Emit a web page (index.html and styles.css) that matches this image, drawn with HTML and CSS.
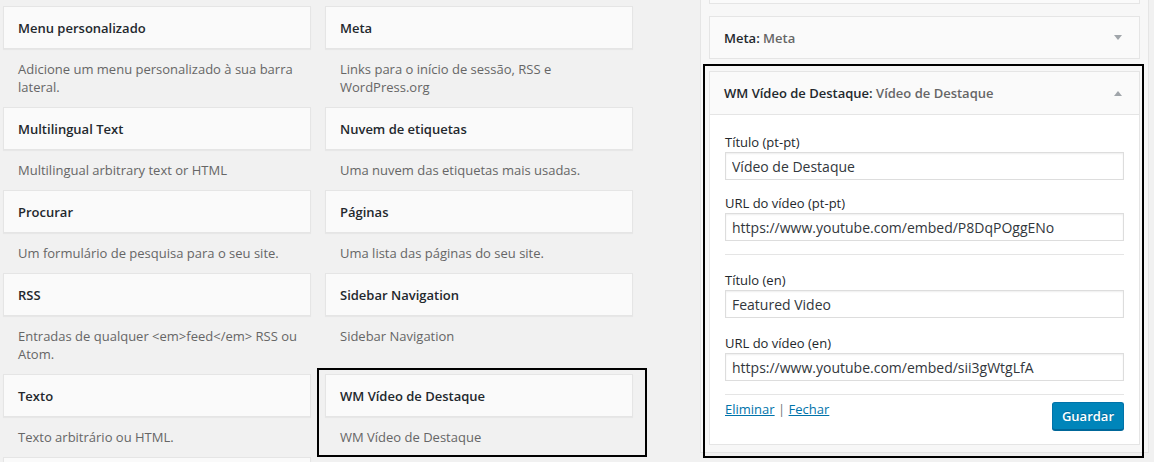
FILE: index.html
```html
<!DOCTYPE html>
<html lang="pt">
<head>
  <meta charset="UTF-8" />
  <meta name="viewport" content="width=device-width, initial-scale=1.0"/>
  <title>Widgets</title>
  <link rel="stylesheet" href="styles.css">
</head>
<body>

  <div class="page">

    <div class="available">
      <div class="widget">
        <div class="widget-top"><h3>Menu personalizado</h3></div>
        <div class="widget-description">Adicione um menu personalizado à sua barra lateral.</div>
      </div>
      <div class="widget">
        <div class="widget-top"><h3>Meta</h3></div>
        <div class="widget-description">Links para o início de sessão, RSS e WordPress.org</div>
      </div>

      <div class="widget">
        <div class="widget-top"><h3>Multilingual Text</h3></div>
        <div class="widget-description">Multilingual arbitrary text or HTML</div>
      </div>
      <div class="widget">
        <div class="widget-top"><h3>Nuvem de etiquetas</h3></div>
        <div class="widget-description">Uma nuvem das etiquetas mais usadas.</div>
      </div>

      <div class="widget">
        <div class="widget-top"><h3>Procurar</h3></div>
        <div class="widget-description">Um formulário de pesquisa para o seu site.</div>
      </div>
      <div class="widget">
        <div class="widget-top"><h3>Páginas</h3></div>
        <div class="widget-description">Uma lista das páginas do seu site.</div>
      </div>

      <div class="widget">
        <div class="widget-top"><h3>RSS</h3></div>
        <div class="widget-description">Entradas de qualquer &lt;em&gt;feed&lt;/em&gt; RSS ou Atom.</div>
      </div>
      <div class="widget">
        <div class="widget-top"><h3>Sidebar Navigation</h3></div>
        <div class="widget-description">Sidebar Navigation</div>
      </div>

      <div class="widget">
        <div class="widget-top"><h3>Texto</h3></div>
        <div class="widget-description">Texto arbitrário ou HTML.</div>
      </div>
      <div class="widget highlight-left">
        <div class="widget-top"><h3>WM Vídeo de Destaque</h3></div>
        <div class="widget-description">WM Vídeo de Destaque</div>
      </div>

      <!-- next widget, only its top edge is in view -->
      <div class="widget">
        <div class="widget-top"></div>
      </div>
    </div>

    <div class="sidebar">
      <div class="sidebar-widget stub"></div>

      <div class="sidebar-widget">
        <div class="widget-top">
          <h3>Meta: <span class="in-widget-title">Meta</span></h3>
          <svg class="toggle" width="8" height="5" viewBox="0 0 8 5"><path d="M0 0h8L4 5z"/></svg>
        </div>
      </div>

      <div class="sidebar-widget highlight-right">
        <div class="widget-top">
          <h3>WM Vídeo de Destaque: <span class="in-widget-title">Vídeo de Destaque</span></h3>
          <svg class="toggle" width="8" height="5" viewBox="0 0 8 5"><path d="M0 5h8L4 0z"/></svg>
        </div>
        <div class="widget-inside">
          <div class="field">
            <label for="t-pt">Título (pt-pt)</label>
            <input id="t-pt" type="text" value="Vídeo de Destaque">
          </div>
          <div class="field">
            <label for="u-pt">URL do vídeo (pt-pt)</label>
            <input id="u-pt" type="text" value="https://www.youtube.com/embed/P8DqPOggENo">
          </div>
          <hr>
          <div class="field lang-start">
            <label for="t-en">Título (en)</label>
            <input id="t-en" type="text" value="Featured Video">
          </div>
          <div class="field wide-gap">
            <label for="u-en">URL do vídeo (en)</label>
            <input id="u-en" type="text" value="https://www.youtube.com/embed/sii3gWtgLfA">
          </div>
          <hr>
          <div class="widget-actions">
            <div class="links">
              <a href="#">Eliminar</a> <span class="sep">|</span> <a href="#">Fechar</a>
            </div>
            <button class="button-primary">Guardar</button>
          </div>
        </div>
      </div>
    </div>

  </div>

</body>
</html>
```

FILE: styles.css
```css
* {
  box-sizing: border-box;
}

html, body {
  overflow: hidden;
}

body {
  margin: 0;
  background-color: #f1f1f1;
  font-family: "Open Sans", "Liberation Sans", sans-serif;
  font-size: 13px;
  line-height: 18px;
  color: #444;
}

.page {
  display: flex;
  align-items: flex-start;
}

/* available widgets */

.available {
  display: grid;
  grid-template-columns: 308px 308px;
  column-gap: 14px;
  margin-left: 3px;
  padding-top: 6px;
}

.widget {
  position: relative;
}

.widget-top {
  display: flex;
  align-items: center;
  height: 43px;
  padding: 0 14px;
  background-color: #fafafa;
  border: 1px solid #e5e5e5;
  box-shadow: 0 1px 1px rgba(0, 0, 0, 0.04);
}

.widget-top h3 {
  flex: 1;
  margin: 0;
  font-size: 13px;
  font-weight: 600;
  color: #23282d;
  white-space: nowrap;
}

.widget-description {
  padding: 11px 8px 11px 15px;
  color: #666;
}

.highlight-left::after {
  content: "";
  position: absolute;
  top: -6px;
  left: -8px;
  width: 326px;
  height: 85px;
  border: 2px solid #000;
  pointer-events: none;
}

/* sidebar */

.sidebar {
  width: 449px;
  margin-left: 67px;
  padding: 0 8px 7px;
  background-color: #f7f7f7;
  border: 1px solid #e5e5e5;
  border-top: none;
}

.sidebar-widget {
  position: relative;
  margin-bottom: 12px;
}

.sidebar-widget:last-child {
  margin-bottom: 0;
}

.sidebar-widget .widget-top {
  height: 43px;
  box-shadow: none;
}

.stub {
  height: 4px;
  background-color: #fafafa;
  border: 1px solid #e5e5e5;
  border-top: none;
}

.highlight-right .widget-top {
  height: 44px;
}

.highlight-right::after {
  content: "";
  position: absolute;
  top: -7px;
  left: -6px;
  width: 437px;
  height: 390px;
  border: 2px solid #000;
  pointer-events: none;
}

.in-widget-title {
  color: #666;
}

.toggle {
  margin-right: 3px;
  fill: #a0a5aa;
}

.widget-inside {
  padding: 18px 15px 14px;
  background-color: #fff;
  border: 1px solid #e5e5e5;
  border-top: none;
}

.field {
  margin-top: 14px;
}

.field:first-child {
  margin-top: 0;
}

.field.lang-start {
  margin-top: 16px;
}

.field.wide-gap {
  margin-top: 16px;
}

.field label {
  display: block;
  color: #23282d;
}

.field input {
  display: block;
  width: 100%;
  height: 28px;
  margin-top: 1px;
  padding: 0 6px;
  border: 1px solid #ddd;
  box-shadow: inset 0 1px 2px rgba(0, 0, 0, 0.07);
  font-family: "Open Sans", "Liberation Sans", sans-serif;
  font-size: 14px;
  color: #32373c;
  background-color: #fff;
}

.widget-inside hr {
  margin: 13px 0 0;
  border: none;
  border-top: 1px solid #e5e5e5;
  height: 0;
}

.widget-actions {
  display: flex;
  justify-content: space-between;
  align-items: flex-start;
  margin-top: 5px;
}

.links a {
  color: #0073aa;
  text-decoration: underline;
}

.links .sep {
  color: #72777c;
}

.button-primary {
  height: 28px;
  margin-top: 2px;
  padding: 0 9px;
  background-color: #0085ba;
  border: 1px solid #0073aa;
  border-bottom-color: #006799;
  border-radius: 3px;
  box-shadow: 0 1px 0 #006799;
  color: #fff;
  font-family: "Open Sans", "Liberation Sans", sans-serif;
  font-size: 13px;
  font-weight: 600;
  text-shadow: 0 -1px 1px #006799;
  cursor: pointer;
}
```
